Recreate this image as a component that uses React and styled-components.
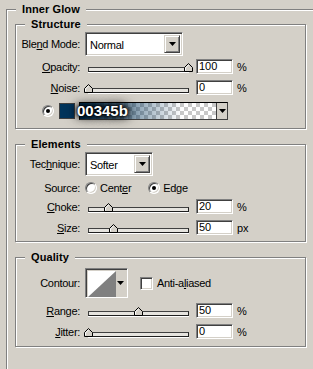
import React from "react";
import styled, { createGlobalStyle, css } from "styled-components";

const GlobalStyle = createGlobalStyle`
  html, body { margin: 0; padding: 0; background: #d4d0c8; overflow: hidden; }
  body { font-family: "Liberation Sans", Arial, sans-serif; font-size: 11px; color: #000; }
  * { box-sizing: border-box; }
`;

const Page = styled.div`
  width: 313px;
  height: 369px;
  overflow: hidden;
  padding: 9px 0 0 6px;
  background: #d4d0c8;
`;

const etched = css`
  position: relative;
  border: 1px solid #808080;
  box-shadow: inset 1px 1px 0 #fff, 1px 1px 0 #fff;
`;

const Outer = styled.section`
  ${etched}
  width: 340px;
  height: 400px;
  padding: 14px 0 0 8px;
  display: flex;
  flex-direction: column;
  gap: 15px;
`;

const Group = styled.div`
  ${etched}
  width: 291px;
  height: ${(p) => p.$h}px;
  display: flex;
  flex-direction: column;
  flex: none;
`;

const Title = styled.span`
  position: absolute;
  top: -8px;
  left: 9px;
  padding: 0 6px;
  background: #d4d0c8;
  font-weight: bold;
  line-height: 14px;
  letter-spacing: 0.1px;
`;

const Row = styled.div`
  position: relative;
  display: flex;
  align-items: center;
  flex: none;
  height: ${(p) => p.$h}px;
  margin-top: ${(p) => p.$mt}px;
`;

const Label = styled.span`
  flex: none;
  width: 64px;
  margin-right: 5px;
  text-align: right;
  white-space: nowrap;
  letter-spacing: -0.3px;
`;

const Text = styled.span`
  white-space: nowrap;
  letter-spacing: -0.3px;
  margin-left: ${(p) => p.$ml || 0}px;
`;

const sunken = css`
  border: 1px solid;
  border-color: #808080 #fff #fff #808080;
  box-shadow: inset 1px 1px 0 #404040, inset -1px -1px 0 #d4d0c8;
`;

const Select = styled.div`
  ${sunken}
  flex: none;
  display: flex;
  width: ${(p) => p.$w}px;
  height: 24px;
  padding: 2px;
  background: #fff;
`;

const SelectValue = styled.span`
  flex: 1;
  padding-left: 2px;
  line-height: 20px;
  letter-spacing: -0.3px;
`;

const DropButton = styled.div`
  flex: none;
  width: 16px;
  display: flex;
  align-items: center;
  justify-content: center;
  background: #d4d0c8;
  border: 1px solid;
  border-color: #d4d0c8 #404040 #404040 #d4d0c8;
  box-shadow: inset 1px 1px 0 #fff, inset -1px -1px 0 #808080;
`;

const Arrow = () => (
  <svg width="7" height="4" viewBox="0 0 7 4">
    <polygon points="0,0 7,0 3.5,4" fill="#000" />
  </svg>
);

const SliderBox = styled.div`
  position: relative;
  flex: none;
  width: 108px;
  height: 15px;
`;

const Track = styled.div`
  position: absolute;
  left: 3px;
  top: 8px;
  width: 101px;
  height: 5px;
  border: 1px solid;
  border-color: #404040 #202020 #202020 #404040;
  background: #e6e4df;
  box-shadow: 0 1px 0 #fff;
`;

const ThumbWrap = styled.div`
  position: absolute;
  top: 4px;
  width: 9px;
  height: 9px;
  line-height: 0;
`;

const Slider = ({ value }) => (
  <SliderBox>
    <Track />
    <ThumbWrap style={{ left: 3 + value - 4 }}>
      <svg width="9" height="9" viewBox="0 0 9 9">
        <polygon points="0.5,8.5 0.5,4.5 4.5,0.5 8.5,4.5 8.5,8.5" fill="#d4d0c8" stroke="#000" />
        <polyline points="1.5,7.5 1.5,4.9 4.5,1.9" fill="none" stroke="#fff" />
      </svg>
    </ThumbWrap>
  </SliderBox>
);

const Field = styled.div`
  ${sunken}
  flex: none;
  width: 37px;
  height: 15px;
  margin-left: 3px;
  padding-left: 2px;
  background: #fff;
  line-height: 13px;
`;

const Unit = styled.span`
  margin-left: 4px;
`;

const SliderRow = ({ label, value, pos, unit, mt }) => (
  <Row $h={15} $mt={mt}>
    <Label>{label}</Label>
    <Slider value={pos} />
    <Field>{value}</Field>
    <Unit>{unit}</Unit>
  </Row>
);

const Radio = styled.span`
  flex: none;
  position: relative;
  width: 12px;
  height: 12px;
  border-radius: 50%;
  background: #fff;
  border: 1px solid;
  border-color: #808080 #fff #fff #808080;
  box-shadow: inset 1px 1px 0 #404040, inset -1px -1px 0 #d4d0c8;
  margin-left: ${(p) => p.$ml || 0}px;
  ${(p) =>
    p.$on &&
    css`
      &::after {
        content: "";
        position: absolute;
        left: 3px;
        top: 3px;
        width: 4px;
        height: 4px;
        border-radius: 50%;
        background: #000;
      }
    `}
`;

const Swatch = styled.div`
  flex: none;
  width: 16px;
  height: 16px;
  margin-left: 5px;
  background: #00345b;
  border: 1px solid #404040;
`;

const GradientBox = styled.div`
  flex: none;
  display: flex;
  width: 149px;
  height: 18px;
  margin-left: 4px;
  border: 1px solid #000;
  border-right-color: #404040;
  border-bottom-color: #404040;
`;

const GradientFill = styled.div`
  flex: 1;
  background:
    linear-gradient(to right, #00345b 0%, rgba(0, 52, 91, 0.6) 30%, rgba(0, 52, 91, 0) 75%),
    repeating-conic-gradient(#c8c8c8 0 25%, #fff 0 50%) 0 0 / 8px 8px;
`;

const GradientDrop = styled.div`
  flex: none;
  width: 11px;
  display: flex;
  align-items: center;
  justify-content: center;
  background: #d4d0c8;
  border-left: 1px solid #404040;
`;

const HexOverlay = styled.span`
  position: absolute;
  left: 61px;
  top: 1px;
  font-size: 15px;
  line-height: 15px;
  font-weight: bold;
  color: #fff;
  text-shadow: 0 0 2px #000, 0 0 4px #000, 0 0 7px #000, 0 0 11px #000, 0 0 14px rgba(0, 0, 0, 0.7);
`;

const Checkbox = styled.span`
  ${sunken}
  flex: none;
  width: 13px;
  height: 13px;
  background: #fff;
  margin-left: 12px;
`;

const ContourBox = styled.div`
  ${sunken}
  flex: none;
  display: flex;
  width: 43px;
  height: 30px;
  padding: 2px;
`;

const ContourPreview = styled.div`
  flex: none;
  width: 28px;
  height: 26px;
  line-height: 0;
  background: #fff;
`;

const ContourDrop = styled.div`
  flex: 1;
  display: flex;
  align-items: center;
  justify-content: center;
  background: #d4d0c8;
`;

export default function App() {
  return (
    <>
      <GlobalStyle />
      <Page>
        <Outer>
          <Title>Inner Glow</Title>

          <Group $h={105}>
            <Title>Structure</Title>
            <Row $h={24} $mt={7}>
              <Label>Ble<u>n</u>d Mode:</Label>
              <Select $w={98}>
                <SelectValue>Normal</SelectValue>
                <DropButton>
                  <Arrow />
                </DropButton>
              </Select>
            </Row>
            <SliderRow mt={3} label={<><u>O</u>pacity:</>} pos={100} value="100" unit="%" />
            <SliderRow mt={6} label={<><u>N</u>oise:</>} pos={0} value="0" unit="%" />
            <Row $h={18} $mt={7}>
              <Radio $on $ml={26} />
              <Swatch />
              <GradientBox>
                <GradientFill />
                <GradientDrop>
                  <Arrow />
                </GradientDrop>
              </GradientBox>
              <HexOverlay>00345b</HexOverlay>
            </Row>
          </Group>

          <Group $h={98}>
            <Title>Elements</Title>
            <Row $h={24} $mt={7}>
              <Label>Tec<u>h</u>nique:</Label>
              <Select $w={68}>
                <SelectValue>Softer</SelectValue>
                <DropButton>
                  <Arrow />
                </DropButton>
              </Select>
            </Row>
            <Row $h={14} $mt={5}>
              <Label>Source:</Label>
              <Radio />
              <Text $ml={3}>Cent<u>e</u>r</Text>
              <Radio $on $ml={17} />
              <Text $ml={3}>Ed<u>g</u>e</Text>
            </Row>
            <SliderRow mt={4} label={<><u>C</u>hoke:</>} pos={20} value="20" unit="%" />
            <SliderRow mt={6} label={<><u>S</u>ize:</>} pos={25} value="50" unit="px" />
          </Group>

          <Group $h={90}>
            <Title>Quality</Title>
            <Row $h={30} $mt={10}>
              <Label>Contour:</Label>
              <ContourBox>
                <ContourPreview>
                  <svg width="28" height="26" viewBox="0 0 28 26">
                    <polygon points="0,26 28,0 28,26" fill="#808080" />
                  </svg>
                </ContourPreview>
                <ContourDrop>
                  <Arrow />
                </ContourDrop>
              </ContourBox>
              <Checkbox />
              <Text $ml={4}>Anti-a<u>l</u>iased</Text>
            </Row>
            <SliderRow mt={5} label={<><u>R</u>ange:</>} pos={50} value="50" unit="%" />
            <SliderRow mt={6} label={<><u>J</u>itter:</>} pos={0} value="0" unit="%" />
          </Group>
        </Outer>
      </Page>
    </>
  );
}
